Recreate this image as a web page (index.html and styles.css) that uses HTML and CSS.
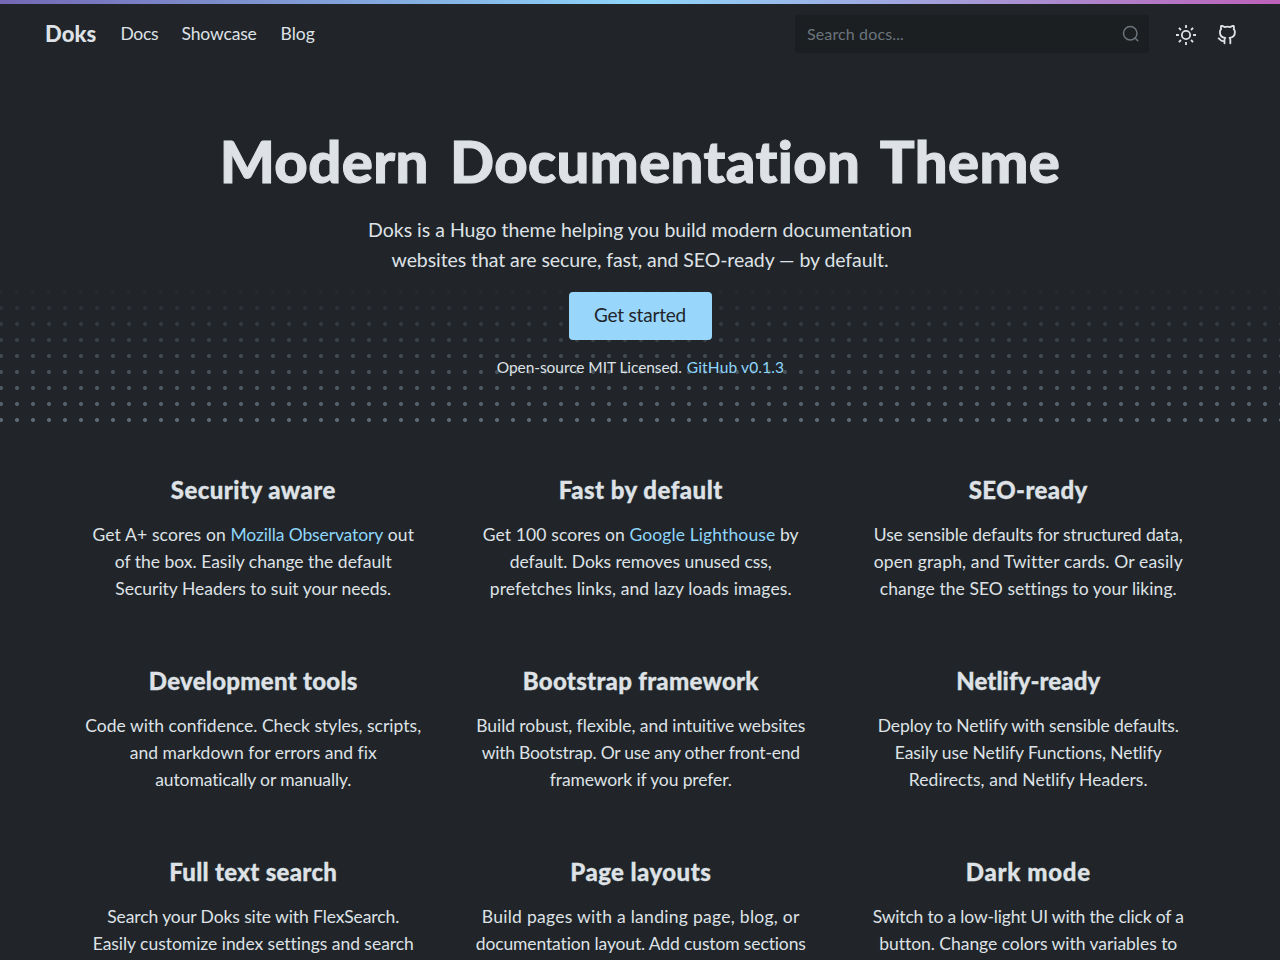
FILE: index.html
```html
<!DOCTYPE html>
<html lang="en">
<head>
<meta charset="utf-8">
<title>Doks</title>
<link rel="stylesheet" href="styles.css">
</head>
<body>
<div class="topbar"></div>
<header class="nav">
  <a class="brand">Doks</a>
  <nav class="links"><a class="docs">Docs</a><a class="show">Showcase</a><a class="blog">Blog</a></nav>
  <div class="search"><span>Search docs...</span>
    <svg width="18" height="18" viewBox="0 0 24 24" fill="none" stroke="currentColor" stroke-width="2" stroke-linecap="round" stroke-linejoin="round"><circle cx="11" cy="11" r="9"/><path d="M21 21l-3.600-3.600"/></svg>
  </div>
  <svg class="icon sun" width="20" height="20" viewBox="0 0 24 24" fill="none" stroke="currentColor" stroke-width="2.200"><circle cx="12" cy="12" r="5"/><path d="M12 0v3.500M12 20.500V24M3.500 3.500l2.500 2.500M18 18l2.500 2.500M0 12h3.500M20.500 12H24M3.500 20.500L6 18M18 6l2.500-2.500"/></svg>
  <svg class="icon" width="20" height="20" viewBox="0 0 24 24" fill="none" stroke="currentColor" stroke-width="2.200" stroke-linecap="round" stroke-linejoin="round"><path d="M9 19c-5 1.500-5-2.500-7-3m14 6v-3.870a3.370 3.370 0 0 0-.94-2.610c3.140-.35 6.440-1.540 6.440-7A5.440 5.440 0 0 0 20 4.770 5.070 5.070 0 0 0 19.910 1S18.730.65 16 2.480a13.380 13.380 0 0 0-7 0C6.270.65 5.090 1 5.090 1A5.070 5.070 0 0 0 5 4.770a5.440 5.440 0 0 0-1.500 3.780c0 5.420 3.300 6.610 6.440 7A3.370 3.370 0 0 0 9 18.130V22"/></svg>
</header>
<section class="hero">
  <h1>Modern Documentation Theme</h1>
  <p class="lead"><span class="lead1">Doks is a Hugo theme helping you build modern documentation</span><span class="lead2">websites that are secure, fast, and SEO-ready — by default.</span></p>
  <a class="button">Get started</a>
  <p class="license"><span>Open-source MIT Licensed.</span><a>GitHub v0.1.3</a></p>
</section>
<main class="features">
  <article><h2 class="h-a">Security aware</h2><p><span class="a1">Get A+ scores on <a>Mozilla Observatory</a> out</span><span class="a2">of the box. Easily change the default</span><span class="a3">Security Headers to suit your needs.</span></p></article>
  <article><h2 class="h-b">Fast by default</h2><p><span class="b1">Get 100 scores on <a>Google Lighthouse</a> by</span><span class="b2">default. Doks removes unused css,</span><span class="b3">prefetches links, and lazy loads images.</span></p></article>
  <article><h2 class="h-c">SEO-ready</h2><p><span class="c1">Use sensible defaults for structured data,</span><span class="c2">open graph, and Twitter cards. Or easily</span><span class="c3">change the SEO settings to your liking.</span></p></article>
  <article><h2 class="h-d">Development tools</h2><p><span class="d1">Code with confidence. Check styles, scripts,</span><span class="d2">and markdown for errors and fix</span><span class="d3">automatically or manually.</span></p></article>
  <article><h2 class="h-e">Bootstrap framework</h2><p><span class="e1">Build robust, flexible, and intuitive websites</span><span class="e2">with Bootstrap. Or use any other front-end</span><span class="e3">framework if you prefer.</span></p></article>
  <article><h2 class="h-f">Netlify-ready</h2><p><span class="f1">Deploy to Netlify with sensible defaults.</span><span class="f2">Easily use Netlify Functions, Netlify</span><span class="f3">Redirects, and Netlify Headers.</span></p></article>
  <article><h2 class="h-g">Full text search</h2><p><span class="g1">Search your Doks site with FlexSearch.</span><span class="g2">Easily customize index settings and search</span></p></article>
  <article><h2 class="h-h">Page layouts</h2><p><span class="h1">Build pages with a landing page, blog, or</span><span class="h2">documentation layout. Add custom sections</span></p></article>
  <article><h2 class="h-i">Dark mode</h2><p><span class="i1">Switch to a low-light UI with the click of a</span><span class="i2">button. Change colors with variables to</span></p></article>
</main>
</body>
</html>
```
FILE: styles.css
```css
* { box-sizing: border-box; }
body {
  margin: 0;
  height: 960px;
  overflow: hidden;
  background: #212529;
  color: #dee2e6;
  font-family: Lato, "Liberation Sans", sans-serif;
  font-size: 17.5px;
  line-height: 27px;
}
h1, h2, p { margin: 0; }
a { white-space: nowrap; }
.topbar { height: 4px; background: linear-gradient(90deg, #7468b4, #8ed6fb 50%, #bd62b8); }

/* navigation */
.nav { display: flex; align-items: center; height: 60px; padding: 0 43px 0 45px; }
.brand { width: 75.500px; padding-bottom: 2px; font-size: 22px; font-weight: 900; letter-spacing: .1px; }
.links { display: flex; flex: 1; padding-bottom: 2px; }
.docs { width: 61px; letter-spacing: -.35px; }
.show { width: 99px; letter-spacing: -.15px; }
.blog { letter-spacing: .05px; }
.search {
  display: flex;
  align-items: center;
  justify-content: space-between;
  width: 354px;
  height: 38px;
  margin-right: 27px;
  padding: 0 9px 0 12px;
  border-radius: 4px;
  background: #1b1f22;
  color: #6c757d;
  font-size: 16px;
  letter-spacing: .133px;
}
.search span { padding-bottom: 2px; }
.icon { position: relative; top: 1px; }
.sun { margin-right: 21px; }

/* hero with dotted backdrop */
.hero {
  display: flex;
  flex-direction: column;
  align-items: center;
  height: 358px;
  padding-top: 61px;
  background:
    linear-gradient(#212529 0 218px, rgba(33, 37, 41, 0)),
    radial-gradient(circle at 8px 8px, #5c6873 1.7px, transparent 2.3px) -7px -4px / 16px 16px;
  white-space: nowrap;
}
h1 {
  font-size: 58px;
  font-weight: 900;
  line-height: 72px;
  letter-spacing: .4px;
  word-spacing: 7px;
  -webkit-text-stroke: 1px currentColor;
}
.lead { margin-top: 18px; font-size: 19.5px; line-height: 30px; }
.lead span, .features p span { display: block; text-align: center; white-space: nowrap; }
.lead1 { letter-spacing: -.007px; }
.lead2 { letter-spacing: -.075px; }
.button {
  width: 143px;
  height: 48px;
  margin-top: 17px;
  border-radius: 4px;
  background: #99d6fc;
  color: #212529;
  font-size: 19px;
  line-height: 46px;
  letter-spacing: -.206px;
  text-align: center;
}
.license { display: flex; gap: 5px; margin-top: 14px; padding-left: 1px; font-size: 15.5px; letter-spacing: -.07px; }
.license a { letter-spacing: .15px; }
.license a, .features a { color: #8ed6fb; }

/* feature grid */
.features {
  display: grid;
  grid-template-columns: repeat(3, 1fr);
  row-gap: 64px;
  padding: 53px 58px 0 59.500px;
  text-align: center;
}
h2 { height: 46px; font-size: 24px; font-weight: 900; line-height: 29px; -webkit-text-stroke: .3px currentColor; }
.h-a { letter-spacing: .439px; }
.h-b { letter-spacing: .469px; }
.h-c { letter-spacing: .392px; }
.h-d { letter-spacing: .277px; }
.h-e { letter-spacing: .284px; }
.h-f { letter-spacing: .066px; }
.h-g { letter-spacing: .301px; }
.h-h { letter-spacing: .451px; }
.h-i { letter-spacing: .689px; }
.a1 { letter-spacing: .14px; }
.a1 a { letter-spacing: -.13px; }
.a2 { letter-spacing: -.002px; }
.a3 { letter-spacing: -.011px; }
.b1 { letter-spacing: .112px; }
.b2 { letter-spacing: -.057px; }
.b3 { letter-spacing: .123px; }
.c1 { letter-spacing: -.101px; }
.c2 { letter-spacing: .162px; }
.c3 { letter-spacing: .055px; }
.d1 { letter-spacing: .028px; }
.d2 { letter-spacing: .025px; }
.d3 { letter-spacing: -.115px; }
.e1 { letter-spacing: -.07px; }
.e2 { letter-spacing: -.247px; }
.e3 { letter-spacing: -.116px; }
.f1 { letter-spacing: -.111px; }
.f2 { letter-spacing: -.087px; }
.f3 { letter-spacing: .081px; }
.g1 { letter-spacing: -.099px; }
.g2 { letter-spacing: -.031px; }
.h1 { letter-spacing: .285px; }
.h2 { letter-spacing: -.131px; }
.i1 { letter-spacing: -.184px; }
.i2 { letter-spacing: -.037px; }
```
